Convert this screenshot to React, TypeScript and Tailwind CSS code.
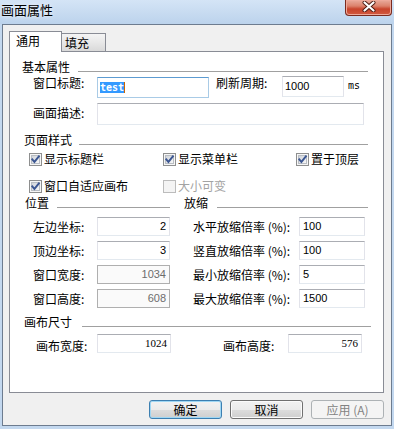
import React from "react";

const sans = "font-['Liberation_Sans',sans-serif]";
const serif = "font-['Liberation_Serif',serif]";
const mono = "font-['DejaVu_Sans_Mono',monospace]";

type BoxProps = {
    className?: string
    children?: React.ReactNode
    disabled?: boolean
    focused?: boolean
}

const TextBox = ({ className = "", children, disabled = false, focused = false }: BoxProps) => {
    const tone = disabled
        ? "border-[#afafaf] bg-[#fafafa] text-[#6d6d6d]"
        : focused
            ? "border-[#a9cbe6] border-t-[#5c9bd1] bg-white"
            : "border-[#e2e3ea] border-t-[#abadb3] border-b-[#e3e9ef] bg-white"
    return <div className={`flex shrink-0 items-center border ${tone} ${className}`}>{children}</div>
}

const Header = ({ title, className = "", lineClass = "" }: { title: string; className?: string; lineClass?: string }) => (
    <div className={`flex h-[16px] items-start ${className}`}>
        <span className="whitespace-nowrap leading-[16px]">{title}</span>
        <div className={`mt-[12px] h-px flex-1 bg-[#a0a0a0] ${lineClass}`} />
    </div>
)

const CheckItem = ({ label, disabled = false, className = "" }: { label: string; disabled?: boolean; className?: string }) => (
    <div className={`flex items-center ${className}`}>
        <div className={`relative flex h-[13px] w-[13px] shrink-0 items-center justify-center border ${disabled ? "border-[#bcbcbc] bg-[#f4f4f4]" : "border-[#8e8f8f] bg-[#f6f6f6]"}`}>
            {!disabled && (
                <>
                    <div className="h-[9px] w-[9px] border border-[#b9bdc3] bg-[linear-gradient(135deg,#cfd3d9,#f8f8f8)]" />
                    <svg className="absolute left-0 top-0" width="11" height="11" viewBox="0 0 11 11">
                        <path d="M2.3 5.4 L4.4 7.9 L8.9 2.3" fill="none" stroke="#3b5692" strokeWidth="1.9" strokeLinecap="square" />
                    </svg>
                </>
            )}
        </div>
        <span className={`ml-[2px] whitespace-nowrap leading-[14px] ${disabled ? "text-[#a3a3a3]" : ""}`}>{label}</span>
    </div>
)

type Field = { leftLabel: string; leftValue: string; leftDisabled?: boolean; rightLabel: string; rightValue: string }

const fields: Field[] = [
    { leftLabel: "左边坐标:", leftValue: "2", rightLabel: "水平放缩倍率 (%):", rightValue: "100" },
    { leftLabel: "顶边坐标:", leftValue: "3", rightLabel: "竖直放缩倍率 (%):", rightValue: "100" },
    { leftLabel: "窗口宽度:", leftValue: "1034", leftDisabled: true, rightLabel: "最小放缩倍率 (%):", rightValue: "5" },
    { leftLabel: "窗口高度:", leftValue: "608", leftDisabled: true, rightLabel: "最大放缩倍率 (%):", rightValue: "1500" },
]

const Button = ({ children, variant = "normal" }: { children: React.ReactNode; variant?: "normal" | "default" | "disabled" }) => {
    const tone =
        variant === "disabled"
            ? "border-[#adb2b5] bg-[#f4f4f4] text-[#838383]"
            : variant === "default"
                ? "border-[#3c7fb1] bg-[linear-gradient(to_bottom,#f2f2f2_0%,#ebebeb_50%,#dddddd_50%,#cfcfcf_100%)] shadow-[inset_0_0_0_1px_#9fd7f4]"
                : "border-[#707070] bg-[linear-gradient(to_bottom,#f2f2f2_0%,#ebebeb_50%,#dddddd_50%,#cfcfcf_100%)] shadow-[inset_0_0_0_1px_#fbfbfb]"
    return (
        <div className={`flex h-[19px] w-[73px] items-center justify-center whitespace-nowrap rounded-[3px] border leading-[14px] ${tone}`}>
            {children}
        </div>
    )
}

export default function App() {
    return (
        <div className="flex h-[429px] w-[394px] flex-col overflow-hidden bg-[#c3d8ef] font-['Noto_Sans_CJK_SC',sans-serif] text-[12px] text-black">
            {/* title bar */}
            <div className="flex h-[24px] shrink-0 items-start justify-between bg-[linear-gradient(to_bottom,#d4e4f6,#bcd3ec)]">
                <span className="pl-[1px] pt-[1px] text-[13px] leading-[17px] [text-shadow:0_0_5px_#ffffff]">画面属性</span>
                <div className="mr-[2px] flex h-[16px] w-[47px] items-start justify-center rounded-b-[4px] border border-t-0 border-[#7a2b1f] bg-[linear-gradient(to_bottom,#e9ab9c,#dc826c_40%,#c8442c_60%,#d25a40)] pt-px shadow-[inset_0_0_0_1px_#eea99a]">
                    <svg width="14" height="11" viewBox="0 0 14 11">
                        <path d="M2.5 1.5 L11.5 9.5 M11.5 1.5 L2.5 9.5" stroke="#4a1a12" strokeWidth="4" strokeLinecap="round" />
                        <path d="M2.5 1.5 L11.5 9.5 M11.5 1.5 L2.5 9.5" stroke="#ffffff" strokeWidth="2.2" strokeLinecap="round" />
                    </svg>
                </div>
            </div>

            {/* dialog body */}
            <div className="mx-[2px] flex h-[402px] shrink-0 flex-col border border-[#6d7c8f] bg-[#f0f0f0]">
                <div className="ml-[6px] mt-[6px] flex h-[21px] items-end">
                    <div className="relative z-10 h-[21px] w-[53px] border border-b-0 border-[#898c95] bg-white pl-[6px] pt-[2px] leading-[14px]">通用</div>
                    <div className="-ml-px mb-px h-[18px] w-[45px] border border-b-0 border-[#898c95] bg-[linear-gradient(to_bottom,#f4f4f4,#e8e8e8_50%,#d9d9d9)] pl-[3px] pt-[2px] leading-[14px]">填充</div>
                </div>

                <div className="-mt-px ml-[6px] flex h-[342px] w-[375px] flex-col border border-[#898c95] bg-white">
                    <Header title="基本属性" className="mt-[7px] pl-[12px] pr-[15px]" lineClass="ml-[8px]" />

                    <div className="mt-[1px] flex h-[22px] items-start">
                        <span className="ml-[23px] w-[64px] leading-[14px]">窗口标题:</span>
                        <TextBox className="mt-[1px] h-[21px] w-[112px]" focused>
                            <span className={`ml-[2px] bg-[#3399ff] text-[10px] font-bold leading-[11px] text-white ${mono}`}>test</span>
                            <span className="h-[11px] w-px bg-[#cc6600]" />
                        </TextBox>
                        <span className="ml-[7px] w-[66px] leading-[14px]">刷新周期:</span>
                        <TextBox className="h-[21px] w-[62px]">
                            <span className={`pl-[2px] text-[11px] ${sans}`}>1000</span>
                        </TextBox>
                        <span className={`ml-[4px] mt-[4px] text-[10px] leading-[12px] text-[#000000] ${mono}`}>ms</span>
                    </div>

                    <div className="mt-[5px] flex h-[22px] items-start">
                        <span className="ml-[23px] mt-[3px] w-[64px] leading-[14px]">画面描述:</span>
                        <TextBox className="h-[22px] w-[267px]" />
                    </div>

                    <Header title="页面样式" className="mt-[7px] pl-[14px] pr-[15px]" lineClass="ml-[7px]" />

                    <div className="ml-[19px] mt-[4px] flex h-[14px] items-center">
                        <CheckItem label="显示标题栏" className="w-[134px]" />
                        <CheckItem label="显示菜单栏" className="w-[133px]" />
                        <CheckItem label="置于顶层" />
                    </div>
                    <div className="ml-[19px] mt-[13px] flex h-[14px] items-center">
                        <CheckItem label="窗口自适应画布" className="w-[134px]" />
                        <CheckItem label="大小可变" disabled />
                    </div>

                    <div className="mt-[2px] flex h-[16px]">
                        <Header title="位置" className="w-[160px] pl-[15px]" lineClass="ml-[8px]" />
                        <Header title="放缩" className="flex-1 pl-[14px] pr-[15px]" lineClass="ml-[9px]" />
                    </div>

                    <div className="mt-[6px] flex flex-col gap-[5px]">
                        {fields.map((f) => (
                            <div key={f.leftLabel} className="flex h-[19px] items-center">
                                <span className="ml-[23px] w-[64px] leading-[14px]">{f.leftLabel}</span>
                                <TextBox className="h-[19px] w-[73px] justify-end pr-[3px]" disabled={f.leftDisabled}>
                                    <span className={`text-[11px] ${sans}`}>{f.leftValue}</span>
                                </TextBox>
                                <span className="ml-[23px] w-[106px] whitespace-nowrap leading-[14px]">{f.rightLabel}</span>
                                <TextBox className="h-[19px] w-[66px] pl-[3px]">
                                    <span className={`text-[11px] ${sans}`}>{f.rightValue}</span>
                                </TextBox>
                            </div>
                        ))}
                    </div>

                    <Header title="画布尺寸" className="mt-[6px] pl-[14px] pr-[12px]" lineClass="ml-[10px]" />

                    <div className="mt-[4px] flex h-[19px] items-end">
                        <span className="ml-[26px] w-[61px] leading-[14px]">画布宽度:</span>
                        <TextBox className="h-[19px] w-[74px] justify-end pr-[3px]">
                            <span className={`text-[11px] ${serif}`}>1024</span>
                        </TextBox>
                        <span className="ml-[52px] w-[65px] leading-[14px]">画布高度:</span>
                        <TextBox className="h-[19px] w-[74px] justify-end pr-[3px]">
                            <span className={`text-[11px] ${serif}`}>576</span>
                        </TextBox>
                    </div>
                </div>

                <div className="mt-[7px] flex justify-end gap-[8px] pr-[7px]">
                    <Button variant="default">确定</Button>
                    <Button>取消</Button>
                    <Button variant="disabled">应用 (A)</Button>
                </div>
            </div>
        </div>
    )
}
